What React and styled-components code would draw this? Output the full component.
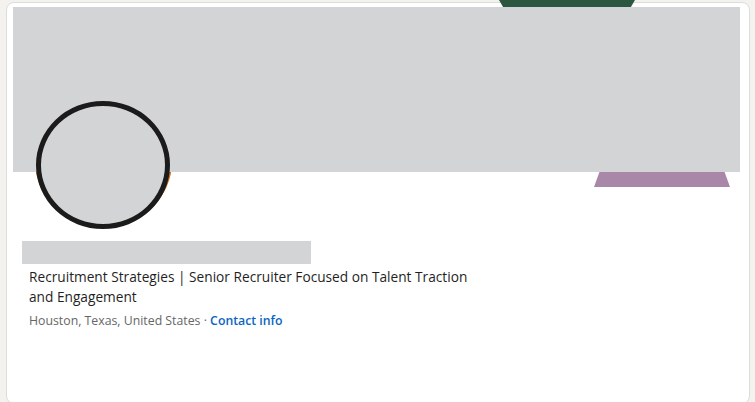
import React from 'react';
import styled, { createGlobalStyle } from 'styled-components';

const GlobalStyle = createGlobalStyle`
  html, body {
    margin: 0;
    padding: 0;
    background: #f3f2ef;
  }
  body {
    font-family: "Open Sans", "Noto Sans", Arial, sans-serif;
  }
`;

const Page = styled.div`
  padding: 2px 5px 2px 6px;
`;

const Card = styled.section`
  position: relative;
  display: flex;
  flex-direction: column;
  align-items: flex-start;
  height: 396px;
  padding: 4px 9px 0 6px;
  background: #ffffff;
  border: 1px solid #dedddb;
  border-radius: 8px;
`;

const Banner = styled.div`
  position: relative;
  z-index: 1;
  align-self: stretch;
  height: 165px;
  background: #d3d4d5;
`;

const Tab = styled.div`
  position: absolute;
  z-index: 2;
  background: ${(p) => p.color};
  clip-path: ${(p) => p.shape};
`;

const TopTab = styled(Tab)`
  left: 492px;
  top: -3px;
  width: 136px;
  height: 7px;
`;

const BottomTab = styled(Tab)`
  left: 587px;
  top: 169px;
  width: 136px;
  height: 15px;
`;

const AvatarWrap = styled.div`
  position: relative;
  width: 134px;
  height: 128px;
  margin: -71px 0 0 23px;
`;

const Halo = styled.div`
  position: absolute;
  z-index: 0;
  left: -1.5px;
  top: -5px;
  width: 137px;
  height: 131px;
  border-radius: 50%;
  background: #c9681a;
`;

const Avatar = styled.div`
  position: relative;
  z-index: 3;
  box-sizing: border-box;
  width: 134px;
  height: 128px;
  border-radius: 50%;
  border: 5.5px solid #1b1b1b;
  background: #d3d4d5;
`;

const NamePlaceholder = styled.div`
  width: 289px;
  height: 23px;
  margin: 12px 0 0 9px;
  background: #d3d4d5;
`;

const Info = styled.div`
  display: flex;
  flex-direction: column;
  gap: 4px;
  margin: 3px 0 0 16px;
  width: 450px;
`;

const Headline = styled.div`
  font-size: 13.7px;
  line-height: 20px;
  color: #1f1f1f;
`;

const Location = styled.div`
  font-size: 12.3px;
  line-height: 20px;
  color: #666666;
`;

const ContactLink = styled.a`
  color: #0a66c2;
  font-weight: 600;
  text-decoration: none;
`;

export default function App() {
  return (
    <>
      <GlobalStyle />
      <Page>
        <Card>
          <TopTab color="#2b5740" shape="polygon(0 0, 100% 0, 97% 100%, 3% 100%)" />
          <Banner />
          <BottomTab color="#a887a9" shape="polygon(4% 0, 96% 0, 100% 100%, 0 100%)" />
          <AvatarWrap>
            <Halo />
            <Avatar />
          </AvatarWrap>
          <NamePlaceholder />
          <Info>
            <Headline>
              Recruitment Strategies | Senior Recruiter Focused on Talent Traction and Engagement
            </Headline>
            <Location>
              Houston, Texas, United States · <ContactLink href="#">Contact info</ContactLink>
            </Location>
          </Info>
        </Card>
      </Page>
    </>
  );
}
